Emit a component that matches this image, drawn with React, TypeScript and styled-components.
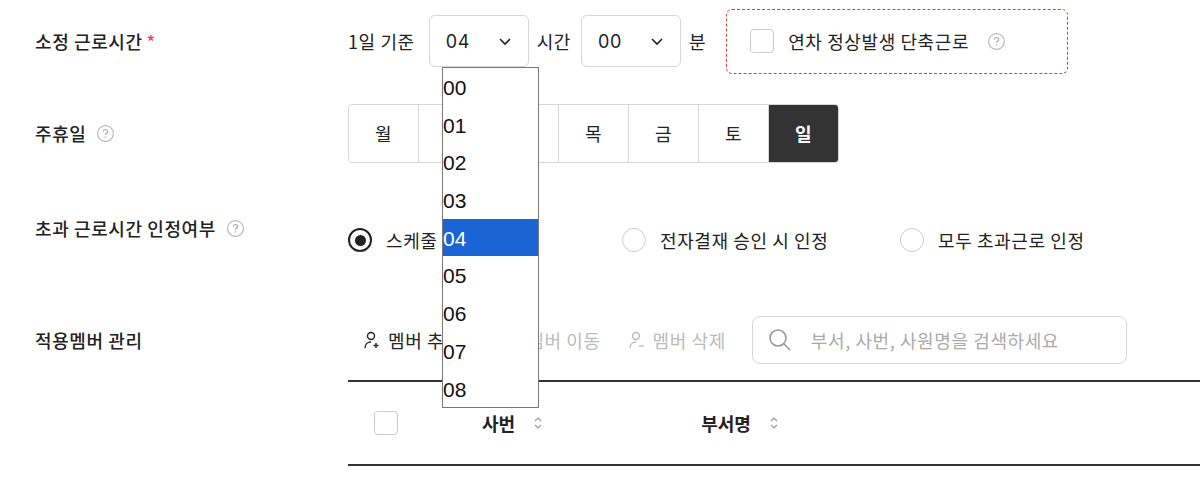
import React from "react";
import styled, { createGlobalStyle } from "styled-components";

const G = createGlobalStyle`
  body { margin:0; background:#fff; font-family: "Noto Sans CJK KR", "Noto Sans", sans-serif; color:#222; }
`;
const Page = styled.div`position:relative; width:1200px; height:490px; overflow:hidden;`;
const Row = styled.div<{ h: number; mt?: number }>`display:grid; grid-template-columns:348px 1fr; align-items:center; height:${p => p.h}px; margin-top:${p => p.mt || 0}px;`;
const Label = styled.div`padding-left:35px; font-size:18px; font-weight:500; display:flex; align-items:center; gap:10px; letter-spacing:0.6px;`;
const Star = styled.span`color:#e5484d; margin-left:-6px;`;
const Content = styled.div`display:flex; align-items:center; font-size:18px; letter-spacing:0.6px;`;
const Sel = styled.div`width:100px; height:52px; box-sizing:border-box; border:1px solid #d6d6d6; border-radius:6px; display:flex; align-items:center; justify-content:space-between; padding:0 16px; font-size:18px; font-family:"Inter",sans-serif;`;
const Dashed = styled.div`margin-left:20px; width:342px; height:65px; box-sizing:border-box; border:1.5px dashed #e03c3c; border-radius:6px; display:flex; align-items:center; padding-left:23px; gap:14px; font-size:18px;`;
const Box = styled.span`width:24px; height:24px; box-sizing:border-box; border:1px solid #ccc; border-radius:4px; display:inline-block;`;
const Days = styled.div`display:flex; border:1px solid #d6d6d6; border-radius:4px; overflow:hidden;`;
const Day = styled.div<{ on?: boolean }>`width:69px; height:57px; display:flex; align-items:center; justify-content:center; font-size:18px; border-left:1px solid #d6d6d6; &:first-child{border-left:none;} background:${p => p.on ? "#333" : "#fff"}; color:${p => p.on ? "#fff" : "#222"}; font-weight:${p => p.on ? 700 : 400};`;
const Radio = styled.div<{ w: number }>`width:${p => p.w}px; display:flex; align-items:center; gap:14px; font-size:18px; padding-top:24px;`;
const Circle = styled.span<{ on?: boolean }>`width:24px; height:24px; box-sizing:border-box; border-radius:50%; border:${p => p.on ? "2px solid #222" : "1px solid #ccc"}; display:flex; align-items:center; justify-content:center; &::after{content:""; width:11px; height:11px; border-radius:50%; background:${p => p.on ? "#222" : "transparent"};}`;
const Tool = styled.div<{ dim?: boolean }>`display:flex; align-items:center; gap:6px; color:${p => p.dim ? "#bbb" : "#222"}; font-size:18px; margin-right:${p => p.dim ? 26 : 40}px;`;
const Search = styled.div`width:375px; height:48px; box-sizing:border-box; border:1px solid #d6d6d6; border-radius:8px; display:flex; align-items:center; padding-left:14px; gap:18px; color:#aaa; font-size:18px;`;
const Table = styled.div`margin-left:348px; border-top:2px solid #333; border-bottom:2px solid #333; height:82px; display:flex; align-items:center; padding-left:26px; font-size:18px; font-weight:700;`;
const Th = styled.div<{ ml: number }>`margin-left:${p => p.ml}px; display:flex; align-items:center; gap:18px;`;
const Drop = styled.div`position:absolute; left:442px; top:67px; width:97px; height:341px; box-sizing:border-box; border:1px solid #777; background:#fff; font-family:"Liberation Sans",sans-serif; font-size:21px;`;
const Opt = styled.div<{ on?: boolean }>`height:37.7px; line-height:40px; background:${p => p.on ? "#1a64d3" : "#fff"}; color:${p => p.on ? "#fff" : "#111"};`;

const Help = () => (<svg width="19" height="19" viewBox="0 0 18 18"><circle cx="9" cy="9" r="7.5" fill="none" stroke="#bbb" strokeWidth="1.2"/><path d="M7 7.2a2 2 0 1 1 2.6 1.9c-.5.2-.6.5-.6 1" fill="none" stroke="#aaa" strokeWidth="1.1"/><circle cx="9" cy="12.3" r=".7" fill="#aaa"/></svg>);
const Chev = () => (<svg width="14" height="14" viewBox="0 0 14 14"><path d="M2 5l5 5 5-5" fill="none" stroke="#222" strokeWidth="1.6"/></svg>);
const Person = ({ c, plus }: { c: string; plus?: boolean }) => (<svg width="20" height="20" viewBox="0 0 20 20" fill="none" stroke={c} strokeWidth="1.4"><circle cx="9" cy="6" r="3.5"/><path d="M3 18c0-3.5 2.5-6 6-6"/>{plus ? <path d="M14 13v5M11.5 15.5h5"/> : <path d="M12 16h5"/>}</svg>);
const Sort = () => (<svg width="10" height="18" viewBox="0 0 10 18" fill="none" stroke="#999" strokeWidth="1.2"><path d="M2 7l3-3 3 3M2 11l3 3 3-3"/></svg>);

export default function App() {
  return (
    <Page>
      <G />
      <Row h={82}>
        <Label>소정 근로시간 <Star>*</Star></Label>
        <Content>
          <span style={{ marginRight: 14 }}>1일 기준</span>
          <Sel>04 <Chev /></Sel>
          <span style={{ margin: "0 10px 0 8px" }}>시간</span>
          <Sel>00 <Chev /></Sel>
          <span style={{ marginLeft: 8 }}>분</span>
          <Dashed><Box />연차 정상발생 단축근로 <span style={{ marginLeft: 4, display: "flex" }}><Help /></span></Dashed>
        </Content>
      </Row>
      <Row h={102}>
        <Label>주휴일 <Help /></Label>
        <Content>
          <Days>{["월", "화", "수", "목", "금", "토", "일"].map((d, i) => <Day key={d} on={i === 6}>{d}</Day>)}</Days>
        </Content>
      </Row>
      <Row h={88}>
        <Label>초과 근로시간 인정여부 <Help /></Label>
        <Content>
          <Radio w={274}><Circle on />스케줄 기준 인정</Radio>
          <Radio w={278}><Circle />전자결재 승인 시 인정</Radio>
          <Radio w={250}><Circle />모두 초과근로 인정</Radio>
        </Content>
      </Row>
      <Row h={80} mt={28}>
        <Label>적용멤버 관리</Label>
        <Content style={{ paddingLeft: 14 }}>
          <Tool><Person c="#222" plus />멤버 추가</Tool>
          <Tool dim><Person c="#bbb" />멤버 이동</Tool>
          <Tool dim><Person c="#bbb" />멤버 삭제</Tool>
          <Search><svg width="26" height="26" viewBox="0 0 26 26" fill="none" stroke="#999" strokeWidth="1.6"><circle cx="11" cy="11" r="8"/><path d="M17 17l6 6"/></svg>부서, 사번, 사원명을 검색하세요</Search>
        </Content>
      </Row>
      <Table>
        <Box />
        <Th ml={84}>사번 <Sort /></Th>
        <Th ml={158}>부서명 <Sort /></Th>
      </Table>
      <Drop>{["00", "01", "02", "03", "04", "05", "06", "07", "08"].map(o => <Opt key={o} on={o === "04"}>{o}</Opt>)}</Drop>
    </Page>
  );
}
